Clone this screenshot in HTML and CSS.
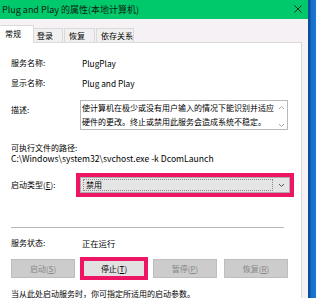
FILE: index.html
```html
<!DOCTYPE html>
<html lang="zh-CN">
<head>
<meta charset="utf-8">
<link rel="stylesheet" href="styles.css">
</head>
<body>
<div class="window">
  <div class="titlebar">
    <span class="title">Plug and Play 的属性(本地计算机)</span>
    <svg class="close" width="8" height="8" viewBox="0 0 8 8"><path d="M0.5 0.5 L7.5 7.5 M7.5 0.5 L0.5 7.5" stroke="#1b2a20" stroke-width="1" fill="none"/></svg>
  </div>
  <div class="body">
    <div class="tabs">
      <div class="tab active t1">常规</div>
      <div class="tab t2">登录</div>
      <div class="tab t3">恢复</div>
      <div class="tab t4">依存关系</div>
    </div>
    <div class="panel">
      <div class="row r1"><span class="label">服务名称:</span><span class="value">PlugPlay</span></div>
      <div class="row r2"><span class="label">显示名称:</span><span class="value">Plug and Play</span></div>
      <div class="row r3"><span class="label desc-label">描述:</span>
        <div class="descbox">
          <div class="desctext">使计算机在极少或没有用户输入的情况下能识别并适应硬件的更改。终止或禁用此服务会造成系统不稳定。</div>
          <div class="scroll">
            <svg width="7" height="5" viewBox="0 0 7 5"><path d="M1 4 L3.5 1.5 L6 4" stroke="#a8a8a8" fill="none"/></svg>
            <svg width="7" height="5" viewBox="0 0 7 5"><path d="M1 1 L3.5 3.5 L6 1" stroke="#a8a8a8" fill="none"/></svg>
          </div>
        </div>
      </div>
      <div class="pathlabel">可执行文件的路径:</div>
      <div class="path">C:\Windows\system32\svchost.exe -k DcomLaunch</div>
      <div class="row r6"><span class="label">启动类型(<u>E</u>):</span>
        <div class="select">
          <div class="focus">禁用</div>
          <svg class="arrow" width="7" height="5" viewBox="0 0 7 5"><path d="M1 1 L3.5 3.5 L6 1" stroke="#555" fill="none"/></svg>
        </div>
      </div>
      <div class="sep"></div>
      <div class="row r7"><span class="label">服务状态:</span><span class="value">正在运行</span></div>
      <div class="buttons">
        <div class="btn disabled">启动(<u>S</u>)</div>
        <div class="btn stop">停止(<u>T</u>)</div>
        <div class="btn disabled">暂停(<u>P</u>)</div>
        <div class="btn disabled">恢复(<u>R</u>)</div>
      </div>
      <div class="note">当从此处启动服务时，你可指定所适用的启动参数。</div>
    </div>
  </div>
</div>
<div class="desk"></div>
</body>
</html>
```

FILE: styles.css
```css
html, body {
  margin: 0;
  padding: 0;
}
body {
  width: 316px;
  height: 298px;
  overflow: hidden;
  display: flex;
  font-family: "Noto Sans CJK SC", "Noto Sans", sans-serif;
  font-size: 8px;
  color: #000;
}
.window {
  width: 308px;
  display: flex;
  flex-direction: column;
}
.desk {
  width: 8px;
  background: linear-gradient(90deg, #0b4f98 0, #0b4f98 2px, #1670cc 3px, #1a76d2 8px);
}
.titlebar {
  height: 19px;
  background: #00c96b;
  display: flex;
  align-items: center;
  justify-content: space-between;
  padding: 0 6px 0 2px;
  flex-shrink: 0;
}
.title {
  font-size: 9px;
  line-height: 12px;
  color: #0d1f14;
}
.close {
  display: block;
  margin-top: -1px;
}
.body {
  flex: 1;
  background: #f5f1f5;
  padding-right: 6px;
  display: flex;
  flex-direction: column;
}
.tabs {
  height: 23px;
  display: flex;
  align-items: flex-end;
  flex-shrink: 0;
  position: relative;
  z-index: 1;
}
.tab {
  box-sizing: border-box;
  height: 14px;
  line-height: 13px;
  border: 1px solid #dadada;
  border-bottom: none;
  background: #f0f0f0;
  padding-left: 3px;
  margin-left: 1px;
  white-space: nowrap;
  overflow: hidden;
}
.tab.active {
  height: 18px;
  margin-bottom: -1px;
  background: #fff;
  line-height: 16px;
  border-left: none;
  margin-left: 0;
  padding-left: 5px;
}
.t1 { width: 34px; }
.t2 { width: 29px; margin-left: 0; border-left: none; }
.t3 { width: 31px; padding-left: 4px; }
.t4 { width: 38px; padding-left: 4px; }
.panel {
  flex: 1;
  background: #fff;
  border-top: 1px solid #dadada;
  border-right: 1px solid #d9d9d9;
  padding-left: 11px;
  display: flex;
  flex-direction: column;
}
.row {
  display: flex;
  align-items: center;
  line-height: 14px;
}
.label {
  width: 69px;
  flex-shrink: 0;
}
.value {
  padding-left: 2px;
  font-size: 8.3px;
}
.r1 { margin-top: 13px; }
.r2 { margin-top: 6px; }
.r3 { margin-top: 10px; align-items: flex-start; }
.desc-label { padding-top: 3px; }
.descbox {
  box-sizing: border-box;
  width: 208px;
  height: 30px;
  border: 1px solid #b9b9b9;
  display: flex;
}
.desctext {
  flex: 1;
  padding: 0 0 0 1px;
  line-height: 14px;
  overflow: hidden;
}
.scroll {
  width: 11px;
  display: flex;
  flex-direction: column;
  justify-content: space-between;
  align-items: center;
  padding: 4px 0 1px;
}
.scroll svg { display: block; }
.pathlabel {
  margin-top: 12px;
  line-height: 11px;
}
.path {
  line-height: 11px;
  font-size: 8.6px;
}
.r6 { margin-top: 13px; }
.select {
  box-sizing: border-box;
  width: 210px;
  height: 16px;
  background: #e5e5e5;
  border: 1px solid #adadad;
  display: flex;
  align-items: center;
  padding: 1px 4px 1px 2px;
  outline: 4px solid #ef1565;
  outline-offset: 0;
}
.focus {
  flex: 1;
  height: 12px;
  box-sizing: border-box;
  border: 1px dotted #8a8a8a;
  line-height: 10px;
  padding-left: 2px;
}
.arrow {
  display: block;
  margin-left: 5px;
}
.sep {
  margin-top: 34px;
  width: 273px;
  height: 1px;
  background: #b8b8b8;
}
.r7 { margin-top: 8px; }
.buttons {
  margin-top: 9px;
  display: flex;
  gap: 7px;
}
.btn {
  box-sizing: border-box;
  width: 64px;
  height: 19px;
  border: 1px solid #bdbdbd;
  background: #cccccc;
  color: #868686;
  text-align: center;
  line-height: 17px;
}
.btn.stop {
  background: #e1e1e1;
  border-color: #adadad;
  color: #000;
  outline: 4px solid #ef1565;
  outline-offset: -2px;
}
.note {
  margin-top: 9px;
  line-height: 14px;
  white-space: nowrap;
}
```
